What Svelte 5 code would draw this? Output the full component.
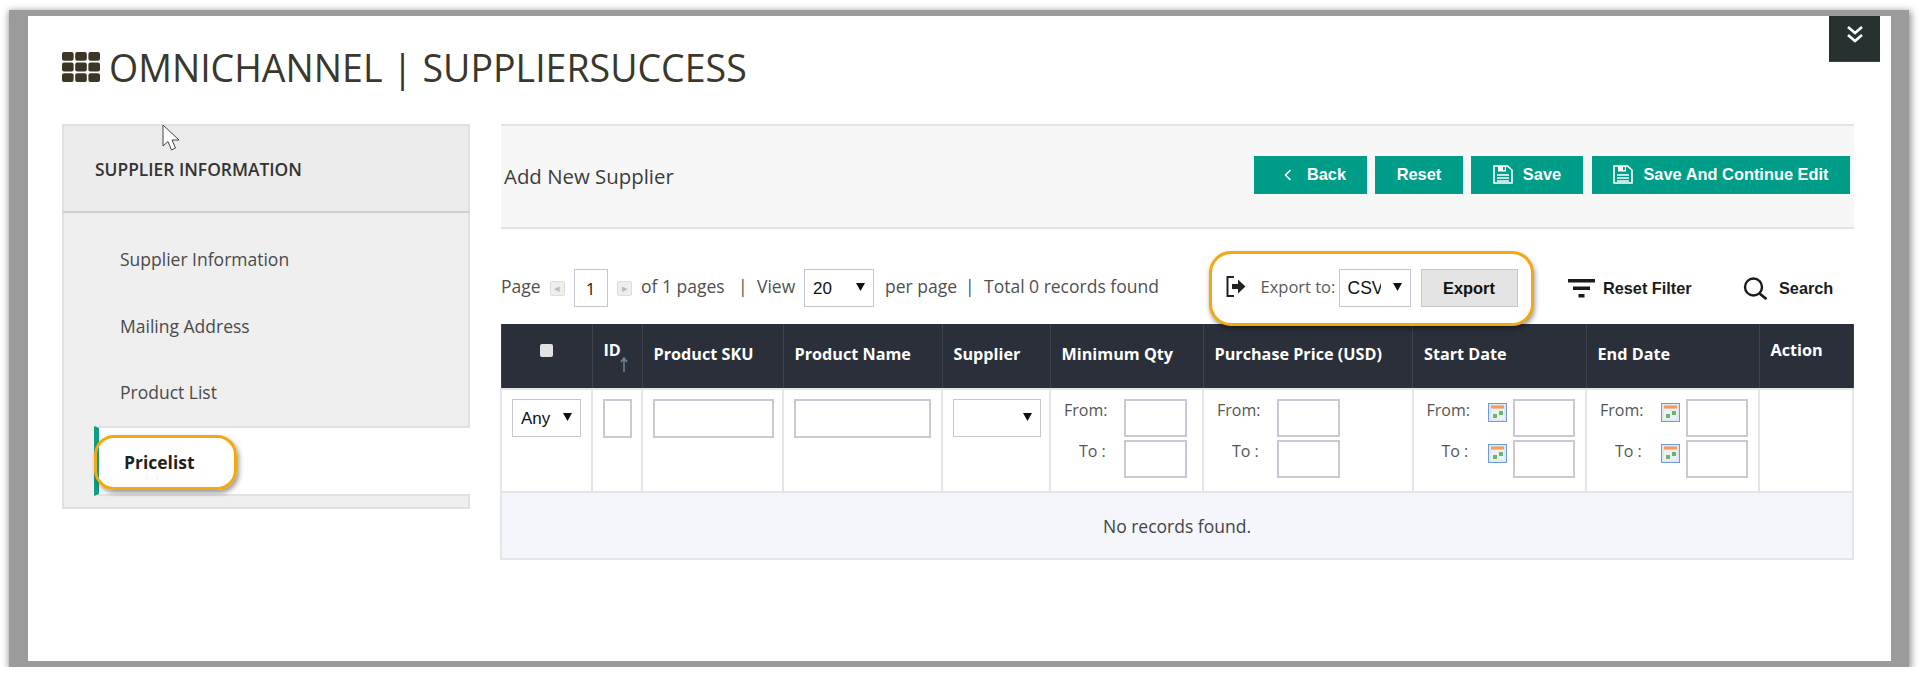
<script>
  const nav = ['Supplier Information', 'Mailing Address', 'Product List'];
  const heads = [
    { label: 'Product SKU' }, { label: 'Product Name' }, { label: 'Supplier' },
    { label: 'Minimum Qty' }, { label: 'Purchase Price (USD)' }, { label: 'Start Date' }, { label: 'End Date' }
  ];
</script>

{#snippet calendar()}
  <svg class="cal" viewBox="0 0 19 19" aria-hidden="true">
    <rect x="0.5" y="0.5" width="18" height="18" fill="#dfe9f6" stroke="#6f9bd6"/>
    <rect x="3" y="2.5" width="13" height="3" fill="#fb9a55"/>
    <rect x="3" y="6" width="13" height="10" fill="#eef1f3"/>
    <rect x="5" y="11" width="4" height="4" fill="#6cb36b"/>
    <rect x="11" y="8" width="4" height="4" fill="#6cb36b"/>
  </svg>
{/snippet}

{#snippet floppy()}
  <svg class="floppy" viewBox="0 0 20 19" aria-hidden="true">
    <path d="M1 1h13.5L19 5v13H1z" fill="none" stroke="#fff" stroke-width="1.6"/>
    <rect x="5" y="1" width="8" height="5.5" fill="#fff"/>
    <rect x="10" y="2" width="1.8" height="3" fill="#009d88"/>
    <path d="M4 10h12M4 13h12M4 16h12" stroke="#fff" stroke-width="1.5"/>
  </svg>
{/snippet}

{#snippet caret()}
  <svg class="caret" viewBox="0 0 9 8" aria-hidden="true"><path d="M0 0h9L4.5 8z" fill="#111"/></svg>
{/snippet}

{#snippet range(dated)}
  <div class="range" class:dated>
    <span class="lbl">From:</span>
    {#if dated}{@render calendar()}{/if}
    <input class="small" />
    <span class="lbl to">To :</span>
    {#if dated}{@render calendar()}{/if}
    <input class="small" />
  </div>
{/snippet}

<div class="frame">
  <div class="sheet">
    <button class="collapse" aria-label="Collapse">
      <svg viewBox="0 0 18 17" width="18" height="17"><path d="M2 1l7 6 7-6M2 9l7 6 7-6" fill="none" stroke="#fff" stroke-width="2.6"/></svg>
    </button>

    <h1 class="title">
      <svg class="grid-icon" viewBox="0 0 38 30" aria-hidden="true">
        {#each [0, 1, 2] as r}
          {#each [0, 1, 2] as c}
            <rect x={c * 13.2} y={r * 10.6} width="11.6" height="8.8" rx="2" fill="#3b3626"/>
          {/each}
        {/each}
      </svg>
      <span class="title-text">OMNICHANNEL | SUPPLIERSUCCESS</span>
    </h1>

    <div class="columns">
      <aside class="side">
        <div class="side-head">SUPPLIER INFORMATION</div>
        <ul class="side-list">
          {#each nav as item}
            <li>{item}</li>
          {/each}
          <li class="active">Pricelist<span class="ring"></span></li>
        </ul>
      </aside>

      <main class="main">
        <div class="panel">
          <span class="panel-title">Add New Supplier</span>
          <div class="actions">
            <button class="btn back">
              <svg class="chev" viewBox="0 0 8 12" aria-hidden="true"><path d="M6.5 1L1.5 6l5 5" fill="none" stroke="#fff" stroke-width="1.6"/></svg>Back
            </button>
            <button class="btn reset">Reset</button>
            <button class="btn save">{@render floppy()}Save</button>
            <button class="btn cont">{@render floppy()}Save And Continue Edit</button>
          </div>
        </div>

        <div class="toolbar">
          <span class="txt page">Page</span>
          <span class="pg">◂</span>
          <input class="pg-input" value="1" />
          <span class="pg">▸</span>
          <span class="txt of">of 1 pages</span>
          <span class="txt sep">|</span>
          <span class="txt view">View</span>
          <div class="sel per-sel"><select><option>20</option></select>{@render caret()}</div>
          <span class="txt per">per page</span>
          <span class="txt sep">|</span>
          <span class="txt total">Total 0 records found</span>

          <div class="export">
            <svg class="export-icon" viewBox="0 0 20 21" aria-hidden="true">
              <path d="M8 1H1.5v19H8" fill="none" stroke="#222" stroke-width="2"/>
              <path d="M6 8h6V3.5l7.5 7-7.5 7V13H6z" fill="#222"/>
            </svg>
            <span class="txt export-lbl">Export to:</span>
            <div class="sel csv-sel"><select><option>CSV</option></select>{@render caret()}</div>
            <button class="export-btn">Export</button>
          </div>

          <div class="tool reset-filter">
            <svg viewBox="0 0 27 19" width="27" height="19" aria-hidden="true">
              <rect y="0" width="27" height="3.5" fill="#1a1a1a"/>
              <rect x="5" y="7.5" width="17" height="3.5" fill="#1a1a1a"/>
              <rect x="10.5" y="15" width="6" height="3.5" fill="#1a1a1a"/>
            </svg>
            Reset Filter
          </div>
          <div class="tool search">
            <svg viewBox="0 0 26 23" width="26" height="23" aria-hidden="true">
              <circle cx="10.5" cy="10" r="8.5" fill="none" stroke="#1a1a1a" stroke-width="2.4"/>
              <path d="M16.5 16.5l7 5.5" stroke="#1a1a1a" stroke-width="2.8"/>
            </svg>
            Search
          </div>
        </div>

        <table class="grid">
          <colgroup>
            <col class="c1"/><col class="c2"/><col class="c3"/><col class="c4"/><col class="c5"/>
            <col class="c6"/><col class="c7"/><col class="c8"/><col class="c9"/><col class="c10"/>
          </colgroup>
          <thead>
            <tr>
              <th class="check"><span class="cb"></span></th>
              <th class="high id">ID
                <svg class="sort" viewBox="0 0 8 15" aria-hidden="true"><path d="M4 15V2M1 5l3-4 3 4" fill="none" stroke="#6f8499" stroke-width="1.5"/></svg>
              </th>
              {#each heads as h}
                <th>{h.label}</th>
              {/each}
              <th class="high">Action</th>
            </tr>
          </thead>
          <tbody>
            <tr class="filters">
              <td><div class="sel any-sel"><select><option>Any</option></select>{@render caret()}</div></td>
              <td><input class="i-id" /></td>
              <td><input class="i-sku" /></td>
              <td><input class="i-name" /></td>
              <td><div class="sel sup-sel"><select><option></option></select>{@render caret()}</div></td>
              <td class="rng">{@render range(false)}</td>
              <td class="rng">{@render range(false)}</td>
              <td class="rng">{@render range(true)}</td>
              <td class="rng">{@render range(true)}</td>
              <td></td>
            </tr>
            <tr class="empty"><td colspan="10">No records found.</td></tr>
          </tbody>
        </table>
      </main>
    </div>

    <svg class="cursor" viewBox="0 0 20 28" aria-hidden="true">
      <path d="M1 1v21l5-4.5 3.5 8.5 4-2-3.5-8h7z" fill="#fff" stroke="#444" stroke-width="1"/>
    </svg>
  </div>
</div>

<style>
  :global(body) {
    margin: 0;
    background: #fff;
    font-family: "Open Sans", "Liberation Sans", sans-serif;
    color: #444;
  }
  * { box-sizing: border-box; }
  .frame {
    width: 1900px;
    height: 657px;
    margin: 10px 0 0 9px;
    padding: 6px 18px 6px 19px;
    background: #9b9b9b;
    box-shadow: 1px 2px 7px 1px rgba(0, 0, 0, 0.45);
  }
  .sheet {
    position: relative;
    height: 645px;
    padding: 36px 0 0 34px;
    background: #fff;
  }
  .collapse {
    position: absolute;
    top: 0;
    right: 11px;
    width: 51px;
    height: 46px;
    padding: 0 0 8px;
    border: 0;
    border-bottom: 1px solid #444;
    background: #263130;
    display: flex;
    align-items: center;
    justify-content: center;
  }
  .title {
    display: flex;
    align-items: center;
    height: 30px;
    margin: 0 0 42px;
    font-size: 37.5px;
    line-height: 30px;
    font-weight: 400;
    color: #3a372c;
    white-space: nowrap;
  }
  .title-text { margin-top: 2px; }
  .grid-icon { width: 38px; height: 30px; margin-right: 9px; }
  .columns { display: flex; gap: 31px; }

  .side { width: 408px; }
  .side-head {
    height: 89px;
    padding: 31px 0 0 31px;
    background: #ececec;
    border: 2px solid #e0e0e4;
    border-bottom-color: #cfcfcf;
    font-size: 17.4px;
    font-weight: 600;
    color: #333;
  }
  .side-list {
    list-style: none;
    margin: 0;
    padding: 13px 0 11.5px;
    background: #efefef;
    border: 2px solid #e0e0e4;
    border-top: 0;
    color: #4a4a4a;
    font-size: 17.5px;
  }
  .side-list li {
    height: 66.5px;
    margin-left: 30px;
    padding-left: 26px;
    display: flex;
    align-items: center;
  }
  .side-list li.active {
    position: relative;
    height: 70px;
    margin-right: -2px;
    padding: 2px 0 0 25px;
    background: #fff;
    border-left: 5px solid #0f9d83;
    border-top: 2px solid #e2e2e2;
    border-bottom: 2px solid #e2e2e2;
    font-weight: 700;
    color: #1f1f1f;
  }
  .ring {
    position: absolute;
    left: -5px;
    top: 7px;
    width: 143px;
    height: 55px;
    border: 3px solid #f4a80f;
    border-radius: 20px;
    box-shadow: 2px 3px 5px rgba(0, 0, 0, 0.4);
  }

  .main { width: 1353px; }
  .panel {
    height: 105px;
    padding: 0 4px 2px 3px;
    display: flex;
    align-items: center;
    justify-content: space-between;
    background: #f7f7f8;
    border-top: 2px solid #e3e3e6;
    border-bottom: 2px solid #e3e3e6;
  }
  .panel-title { font-size: 20.4px; font-weight: 500; color: #3c3c3c; }
  .actions { display: flex; gap: 8px; margin-top: -2px; }
  .btn {
    height: 38px;
    padding: 0;
    border: 0;
    display: flex;
    align-items: center;
    justify-content: center;
    background: #009d88;
    color: #fff;
    font: 700 16.4px "Liberation Sans", Arial, sans-serif;
  }
  .back { width: 113px; gap: 15px; padding-left: 9px; }
  .reset { width: 88px; }
  .save { width: 112px; gap: 10px; margin-right: 1px; }
  .cont { width: 258px; gap: 10px; }
  .chev { width: 8px; height: 12px; }
  .floppy { width: 20px; height: 19px; }

  .toolbar {
    height: 95px;
    padding: 40px 0 17px;
    display: flex;
    align-items: center;
    font-size: 17.5px;
  }
  .toolbar > * { flex: none; }
  .txt { margin-bottom: 4px; color: #505050; white-space: nowrap; }
  .page { width: 48.5px; }
  .pg {
    width: 15px;
    height: 15px;
    background: #eee;
    border: 1px solid #ddd;
    border-radius: 2px;
    color: #bbb;
    font-size: 11px;
    line-height: 12px;
    text-align: center;
  }
  .pg-input {
    width: 34px;
    height: 38px;
    margin: 0 9.5px 0 9px;
    padding: 0;
    text-align: center;
    font: 17px "Open Sans", sans-serif;
    color: #222;
    border: 1px solid #c5c6cf;
  }
  .of { width: 99px; margin-left: 9px; }
  .sep { width: 17px; text-indent: -2px; }
  .view { width: 47px; }
  .per { width: 82px; margin-left: 11px; }
  .total { width: 224.5px; }

  .sel { position: relative; height: 38px; }
  .sel select {
    appearance: none;
    width: 100%;
    height: 100%;
    padding: 0 26px 0 8px;
    border: 1px solid #c5c6cf;
    border-radius: 0;
    background: #fff;
    color: #111;
    font: 17px "Liberation Sans", Arial, sans-serif;
  }
  .caret {
    position: absolute;
    right: 9px;
    top: 14px;
    width: 9px;
    height: 8px;
  }
  .per-sel { width: 70px; }
  .csv-sel { width: 72px; margin-right: 10px; }
  .csv-sel select { padding-right: 29px; font-size: 17.5px; }
  .any-sel { width: 69px; }
  .sup-sel { width: 88px; }

  .export {
    position: relative;
    z-index: 2;
    width: 325.5px;
    height: 75px;
    padding-left: 14px;
    display: flex;
    align-items: center;
    background: #fff;
    border: 3px solid #f4a80f;
    border-radius: 22px;
    box-shadow: 1px 3px 5px rgba(0, 0, 0, 0.4);
  }
  .export-icon { width: 20px; height: 21px; margin: -4px 15px 0 0; flex: none; }
  .export-lbl { width: 78px; color: #5a5a5a; font-size: 16.5px; }
  .export-btn {
    width: 97px;
    height: 38px;
    padding: 0;
    background: #e4e4e4;
    border: 1px solid #c5c6cf;
    color: #111;
    font: 700 16.4px "Liberation Sans", Arial, sans-serif;
  }
  .tool {
    display: flex;
    align-items: center;
    color: #1c1c1c;
    font: 700 16.3px "Liberation Sans", Arial, sans-serif;
  }
  .reset-filter { width: 175px; margin-left: 34px; gap: 8px; }
  .search { gap: 10px; }

  table.grid {
    width: 1352px;
    margin-left: -1px;
    table-layout: fixed;
    border-collapse: collapse;
    font-size: 16px;
  }
  .c1 { width: 91px; } .c2 { width: 50px; } .c3 { width: 141px; } .c4 { width: 159px; }
  .c5 { width: 108px; } .c6 { width: 153px; } .c7 { width: 209.5px; } .c8 { width: 173.5px; }
  .c9 { width: 173px; } .c10 { width: 94px; }
  th {
    height: 65px;
    padding: 0 0 5px 11px;
    background: #2b2f3a;
    border: 1px solid #3e424e;
    border-width: 0 1px;
    color: #fff;
    font-size: 16.2px;
    font-weight: 700;
    text-align: left;
    white-space: nowrap;
  }
  th.high { padding-bottom: 13px; }
  th.id { position: relative; }
  .sort {
    position: absolute;
    left: 27px;
    top: 33px;
    width: 8px;
    height: 15px;
  }
  th.check { padding: 0 0 10px; text-align: center; }
  .cb {
    display: inline-block;
    width: 13px;
    height: 13px;
    background: #e2e2e2;
    border-radius: 2px;
  }
  td { border: 2px solid #e4e5e9; }
  .filters td { height: 103px; padding: 9px 0 0 10px; vertical-align: top; }
  .filters td.rng { padding-left: 13px; }
  input {
    display: block;
    height: 39px;
    padding: 0;
    border: 2px solid #c8c9d2;
    background: #fff;
  }
  .i-id { width: 29px; }
  .i-sku { width: 121px; }
  .i-name { width: 137px; }
  .range {
    display: grid;
    grid-template-columns: 60px 63px;
    row-gap: 3px;
    font-size: 16px;
    color: #555;
  }
  .range.dated { grid-template-columns: 61px 25px 62px; }
  .range input { height: 38px; width: 100%; }
  .lbl { line-height: 22px; white-space: nowrap; }
  .lbl.to { padding-left: 15px; }
  .cal { width: 19px; height: 19px; margin-top: 4px; }
  .empty td {
    height: 67px;
    padding-top: 2px;
    background: #f4f6fb;
    text-align: center;
    color: #444;
    font-size: 17.5px;
  }
  .cursor {
    position: absolute;
    left: 134px;
    top: 108px;
    width: 20px;
    height: 28px;
  }
</style>
